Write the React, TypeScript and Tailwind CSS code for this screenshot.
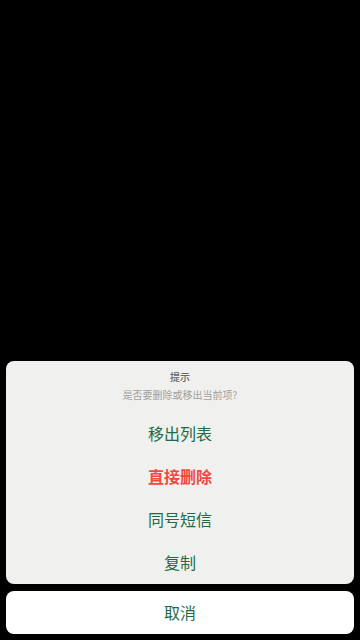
export default function App() {
  const items = [
    { label: "移出列表", danger: false },
    { label: "直接删除", danger: true },
    { label: "同号短信", danger: false },
    { label: "复制", danger: false },
  ];

  return (
    <div
      className="flex h-screen w-full flex-col justify-end bg-black px-[6px] pb-[6px]"
      style={{ fontFamily: '"Noto Sans CJK SC", "Noto Sans", sans-serif' }}
    >
      <div className="overflow-hidden rounded-[8px] bg-[#f0f0ee]">
        <div className="flex flex-col items-center pt-[9px] pb-[10px]">
          <div className="text-[10px] leading-[14px] font-medium text-[#666666]">提示</div>
          <div className="mt-[4px] text-[10px] leading-[14px] text-[#a0a0a0]">是否要删除或移出当前项?</div>
        </div>
        {items.map((item) => (
          <button
            key={item.label}
            className={
              item.danger
                ? "flex h-[43px] w-full items-center justify-center pb-[2px] text-[16px] font-bold text-[#f04a3f]"
                : "flex h-[43px] w-full items-center justify-center pb-[2px] text-[16px] text-[#1e6b47]"
            }
          >
            {item.label}
          </button>
        ))}
      </div>
      <button className="mt-[7px] flex h-[43px] w-full items-center justify-center rounded-[8px] bg-white pb-[2px] text-[16px] text-[#1e6b47]">
        取消
      </button>
    </div>
  );
}
